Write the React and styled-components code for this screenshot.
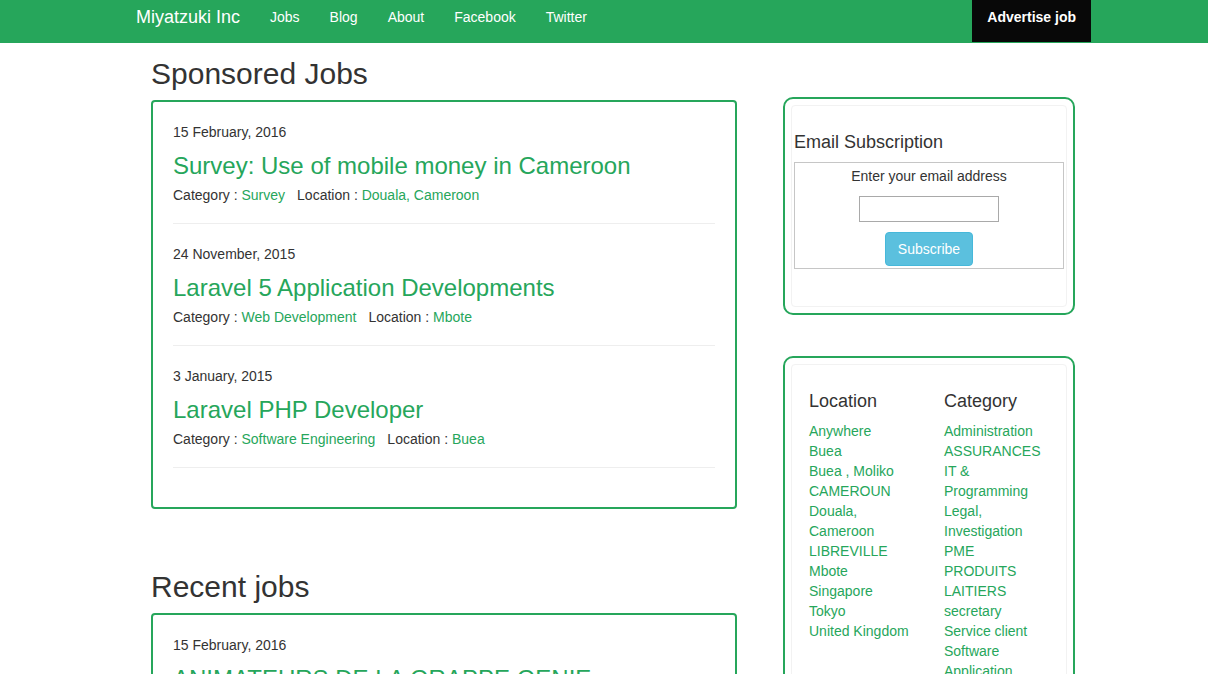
import React from "react";
import styled, { createGlobalStyle } from "styled-components";

const GREEN = "#26a65b";

const GlobalStyle = createGlobalStyle`
  html, body { margin: 0; padding: 0; background: #fff; }
  html { overflow-x: hidden; scrollbar-width: none; }
  html::-webkit-scrollbar { display: none; width: 0; }
  body {
    font-family: "Liberation Sans", Arial, Helvetica, sans-serif;
    font-size: 14px;
    line-height: 20px;
    color: #333;
  }
  * { box-sizing: border-box; }
  a { color: ${GREEN}; text-decoration: none; }
`;

const Navbar = styled.nav`
  background: ${GREEN};
  height: 43px;
  border-bottom: 1px solid ${GREEN};
`;

const Container = styled.div`
  width: 970px;
  margin-left: calc(50% - 483px);
  padding: 0 15px;
`;

const NavInner = styled(Container)`
  display: flex;
  align-items: flex-start;
  height: 42px;
`;

const Brand = styled.a`
  color: #fff;
  font-size: 18px;
  line-height: 20px;
  padding: 7px 15px 0;
  margin-left: -15px;
`;

const NavList = styled.ul`
  display: flex;
  list-style: none;
  margin: 0;
  padding: 0;
`;

const NavLink = styled.a`
  display: block;
  color: #fff;
  padding: 7px 15px;
  line-height: 20px;
`;

const Advertise = styled.a`
  margin-left: auto;
  margin-right: -15px;
  height: 42px;
  background: #080808;
  color: #fff;
  font-weight: bold;
  padding: 7px 15px;
  line-height: 20px;
`;

const Layout = styled.div`
  display: grid;
  grid-template-columns: 586px 292px;
  column-gap: 46px;
  margin-left: 15px;
  align-items: start;
`;

const MainCol = styled.main``;

const SectionTitle = styled.h2`
  font-size: 30px;
  line-height: 33px;
  font-weight: normal;
  margin: ${(p) => (p.$first ? "14px" : "61px")} 0 10px;
  color: #333;
`;

const JobCard = styled.section`
  border: 2px solid ${GREEN};
  border-radius: 4px;
  padding: 20px 20px 19px;
`;

const JobDate = styled.div`
  font-size: 14px;
  line-height: 20px;
`;

const JobTitle = styled.h3`
  font-size: 24px;
  line-height: 26px;
  font-weight: normal;
  margin: 11px 0 6px;
  color: ${GREEN};
`;

const Meta = styled.div`
  display: flex;
  gap: 12px;
  line-height: 20px;
`;

const Divider = styled.hr`
  border: 0;
  border-top: 1px solid #eee;
  margin: 18px 0 20px;
`;

const SideCol = styled.aside`
  margin-top: 54px;
  display: flex;
  flex-direction: column;
  gap: 41px;
`;

const SideCard = styled.div`
  border: 2px solid ${GREEN};
  border-radius: 10px;
  padding: 6px;
`;

const Panel = styled.div`
  border: 1px solid #f2f2f2;
  border-radius: 4px;
  padding: ${(p) => p.$pad};
`;

const SideHeading = styled.h4`
  font-size: 18px;
  line-height: 19.8px;
  font-weight: normal;
  margin: 0 0 ${(p) => p.$gap || "10px"};
  padding-left: ${(p) => p.$indent || 0};
  color: #333;
`;

const Fieldset = styled.fieldset`
  margin: 0 2px;
  border: 1px solid #c6c6c6;
  padding: 3px 0 2px;
  display: flex;
  flex-direction: column;
  align-items: center;
`;

const FieldLabel = styled.label`
  line-height: 20px;
`;

const EmailInput = styled.input`
  width: 140px;
  height: 26px;
  margin-top: 10px;
  border: 1px solid #a9a9a9;
  background: #fff;
  padding: 2px 4px;
  font: inherit;
`;

const SubscribeButton = styled.button`
  margin-top: 10px;
  background: #5bc0de;
  border: 1px solid #46b8da;
  border-radius: 4px;
  color: #fff;
  font-family: inherit;
  font-size: 14px;
  line-height: 20px;
  padding: 6px 12px;
`;

const FilterGrid = styled.div`
  display: grid;
  grid-template-columns: 105px 105px;
  column-gap: 30px;
`;

const LinkList = styled.ul`
  list-style: none;
  margin: 0;
  padding: 0;
  line-height: 20px;
`;

const sponsored = [
  {
    date: "15 February, 2016",
    title: "Survey: Use of mobile money in Cameroon",
    category: "Survey",
    location: "Douala, Cameroon",
  },
  {
    date: "24 November, 2015",
    title: "Laravel 5 Application Developments",
    category: "Web Development",
    location: "Mbote",
  },
  {
    date: "3 January, 2015",
    title: "Laravel PHP Developer",
    category: "Software Engineering",
    location: "Buea",
  },
];

const recent = [
  {
    date: "15 February, 2016",
    title: "ANIMATEURS DE LA GRAPPE GENIE",
    category: "Administration",
    location: "Douala, Cameroon",
  },
];

const locations = [
  "Anywhere",
  "Buea",
  "Buea , Moliko",
  "CAMEROUN",
  "Douala, Cameroon",
  "LIBREVILLE",
  "Mbote",
  "Singapore",
  "Tokyo",
  "United Kingdom",
];

const categories = [
  "Administration",
  "ASSURANCES",
  "IT & Programming",
  "Legal, Investigation",
  "PME",
  "PRODUITS LAITIERS",
  "secretary",
  "Service client",
  "Software Application",
  "Survey",
  "Web Development",
];

function Job({ job }) {
  return (
    <article>
      <JobDate>{job.date}</JobDate>
      <JobTitle>
        <a href="#">{job.title}</a>
      </JobTitle>
      <Meta>
        <span>
          Category : <a href="#">{job.category}</a>
        </span>
        <span>
          Location : <a href="#">{job.location}</a>
        </span>
      </Meta>
      <Divider />
    </article>
  );
}

export default function App() {
  return (
    <>
      <GlobalStyle />
      <Navbar>
        <NavInner>
          <Brand href="#">Miyatzuki Inc</Brand>
          <NavList>
            {["Jobs", "Blog", "About", "Facebook", "Twitter"].map((l) => (
              <li key={l}>
                <NavLink href="#">{l}</NavLink>
              </li>
            ))}
          </NavList>
          <Advertise href="#">Advertise job</Advertise>
        </NavInner>
      </Navbar>
      <Container>
        <Layout>
          <MainCol>
            <SectionTitle $first>Sponsored Jobs</SectionTitle>
            <JobCard>
              {sponsored.map((j) => (
                <Job key={j.title} job={j} />
              ))}
            </JobCard>
            <SectionTitle>Recent jobs</SectionTitle>
            <JobCard>
              {recent.map((j) => (
                <Job key={j.title} job={j} />
              ))}
            </JobCard>
          </MainCol>
          <SideCol>
            <SideCard>
              <Panel $pad="26.5px 0 37px">
                <SideHeading $indent="2px">Email Subscription</SideHeading>
                <Fieldset>
                  <FieldLabel htmlFor="email">Enter your email address</FieldLabel>
                  <EmailInput id="email" type="text" />
                  <SubscribeButton type="button">Subscribe</SubscribeButton>
                </Fieldset>
              </Panel>
            </SideCard>
            <SideCard>
              <Panel $pad="27px 17px 30px">
                <FilterGrid>
                  <div>
                    <SideHeading $gap="9px">Location</SideHeading>
                    <LinkList>
                      {locations.map((l) => (
                        <li key={l}>
                          <a href="#">{l}</a>
                        </li>
                      ))}
                    </LinkList>
                  </div>
                  <div>
                    <SideHeading $gap="9px">Category</SideHeading>
                    <LinkList>
                      {categories.map((c) => (
                        <li key={c}>
                          <a href="#">{c}</a>
                        </li>
                      ))}
                    </LinkList>
                  </div>
                </FilterGrid>
              </Panel>
            </SideCard>
          </SideCol>
        </Layout>
      </Container>
    </>
  );
}
